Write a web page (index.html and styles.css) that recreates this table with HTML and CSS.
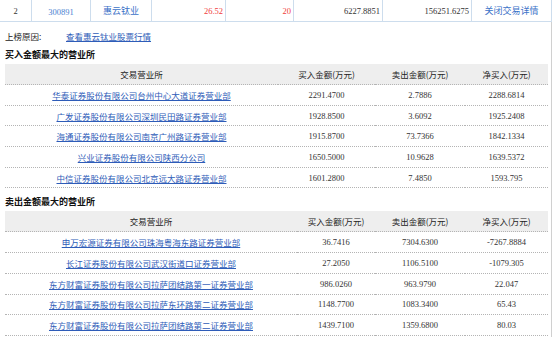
FILE: index.html
```html
<!DOCTYPE html>
<html lang="zh-CN">
<head>
    <meta charset="UTF-8">
    <title>龙虎榜 - 惠云钛业</title>
    <link rel="stylesheet" href="styles.css">
</head>
<body>
    <table class="stock-row">
        <tr>
            <td class="c-no">2</td>
            <td class="c-code"><a href="#">300891</a></td>
            <td class="c-name"><a href="#">惠云钛业</a></td>
            <td class="num red">26.52</td>
            <td class="num red">20</td>
            <td class="num">6227.8851</td>
            <td class="num">156251.6275</td>
            <td class="c-close"><a href="#">关闭交易详情</a></td>
        </tr>
    </table>

    <div class="detail">
        <div class="reason">
            <span class="reason-label">上榜原因:</span>
            <a href="#" class="link">查看惠云钛业股票行情</a>
        </div>

        <h3 class="section-title">买入金额最大的营业所</h3>
        <table class="trade-table buy">
            <colgroup>
                <col class="w-dept"><col class="w-buy"><col class="w-sell"><col class="w-net">
            </colgroup>
            <tr class="head">
                <th>交易营业所</th><th>买入金额(万元)</th><th>卖出金额(万元)</th><th>净买入(万元)</th>
            </tr>
            <tr><td><a href="#" class="link">华泰证券股份有限公司台州中心大道证券营业部</a></td><td class="n">2291.4700</td><td class="n">2.7886</td><td class="n">2288.6814</td></tr>
            <tr><td><a href="#" class="link">广发证券股份有限公司深圳民田路证券营业部</a></td><td class="n">1928.8500</td><td class="n">3.6092</td><td class="n">1925.2408</td></tr>
            <tr><td><a href="#" class="link">海通证券股份有限公司南京广州路证券营业部</a></td><td class="n">1915.8700</td><td class="n">73.7366</td><td class="n">1842.1334</td></tr>
            <tr><td><a href="#" class="link">兴业证券股份有限公司陕西分公司</a></td><td class="n">1650.5000</td><td class="n">10.9628</td><td class="n">1639.5372</td></tr>
            <tr><td><a href="#" class="link">中信证券股份有限公司北京远大路证券营业部</a></td><td class="n">1601.2800</td><td class="n">7.4850</td><td class="n">1593.795</td></tr>
        </table>

        <h3 class="section-title sell-title">卖出金额最大的营业所</h3>
        <table class="trade-table sell">
            <colgroup>
                <col class="w-dept"><col class="w-buy"><col class="w-sell"><col class="w-net">
            </colgroup>
            <tr class="head">
                <th>交易营业所</th><th>买入金额(万元)</th><th>卖出金额(万元)</th><th>净买入(万元)</th>
            </tr>
            <tr><td><a href="#" class="link">申万宏源证券有限公司珠海粤海东路证券营业部</a></td><td class="n">36.7416</td><td class="n">7304.6300</td><td class="n">-7267.8884</td></tr>
            <tr><td><a href="#" class="link">长江证券股份有限公司武汉街道口证券营业部</a></td><td class="n">27.2050</td><td class="n">1106.5100</td><td class="n">-1079.305</td></tr>
            <tr><td><a href="#" class="link">东方财富证券股份有限公司拉萨团结路第一证券营业部</a></td><td class="n">986.0260</td><td class="n">963.9790</td><td class="n">22.047</td></tr>
            <tr><td><a href="#" class="link">东方财富证券股份有限公司拉萨东环路第二证券营业部</a></td><td class="n">1148.7700</td><td class="n">1083.3400</td><td class="n">65.43</td></tr>
            <tr><td><a href="#" class="link">东方财富证券股份有限公司拉萨团结路第二证券营业部</a></td><td class="n">1439.7100</td><td class="n">1359.6800</td><td class="n">80.03</td></tr>
        </table>
    </div>
</body>
</html>
```

FILE: styles.css
```css
body {
    margin: 0;
    background: #fff;
    font-family: "Noto Sans CJK SC", "Liberation Sans", sans-serif;
    font-size: 8.5px;
    color: #333;
}

a {
    text-decoration: none;
}

/* top summary row */
.stock-row {
    width: 552px;
    border-collapse: collapse;
    table-layout: fixed;
}
.stock-row td {
    height: 21px;
    padding: 0 2px;
    border-right: 1px solid #cddded;
    border-bottom: 1px solid #cddded;
    text-align: center;
    white-space: nowrap;
}
.stock-row .c-no { width: 27px; font-family: "Liberation Serif", serif; font-size: 8.5px; }
.stock-row .c-code { width: 54px; }
.stock-row .c-name { width: 56px; }
.stock-row td:nth-child(4) { width: 69px; }
.stock-row td:nth-child(5) { width: 63px; }
.stock-row td:nth-child(6) { width: 84px; }
.stock-row td:nth-child(7) { width: 84px; }
.stock-row .c-code a {
    color: #4a80d0;
    font-family: "Liberation Serif", serif;
    font-size: 8.5px;
}
.stock-row .c-name a,
.stock-row .c-close a {
    color: #3b72c8;
    font-size: 9px;
}
.num {
    text-align: right !important;
    font-family: "Liberation Serif", serif;
    font-size: 8.5px;
}
.red { color: #f03c3c; }

/* detail block */
.detail {
    width: 543px;
    padding: 0 3px 0 5px;
    border-right: 1px solid #d0d0d0;
    min-height: 315px;
}

.reason {
    display: flex;
    align-items: center;
    height: 16px;
    padding-top: 6px;
}
.reason-label {
    width: 61px;
    color: #222;
}

.link {
    color: #2e5cb8;
    text-decoration: underline;
}

.section-title {
    margin: 4px 0 0;
    height: 14px;
    line-height: 14px;
    font-size: 9px;
    font-weight: bold;
    color: #111;
}
.sell-title {
    margin-top: 7px;
}

.trade-table {
    width: 543px;
    margin-top: 2px;
    border-collapse: collapse;
    table-layout: fixed;
}
.trade-table th,
.trade-table td {
    padding: 0;
    height: 19.7px;
    text-align: center;
    white-space: nowrap;
    border-bottom: 1px dotted #b4b4b4;
}
.trade-table th {
    height: 20px;
    background: #eeeeee;
    font-weight: normal;
    color: #222;
}
.trade-table .n {
    font-family: "Liberation Serif", serif;
    font-size: 8.5px;
    color: #333;
}

.buy .w-dept { width: 273px; }
.buy .w-buy { width: 97px; }
.buy .w-sell { width: 90px; }
.buy .w-net { width: 83px; }

.sell .w-dept { width: 292px; }
.sell .w-buy { width: 78px; }
.sell .w-sell { width: 90px; }
.sell .w-net { width: 83px; }
```
